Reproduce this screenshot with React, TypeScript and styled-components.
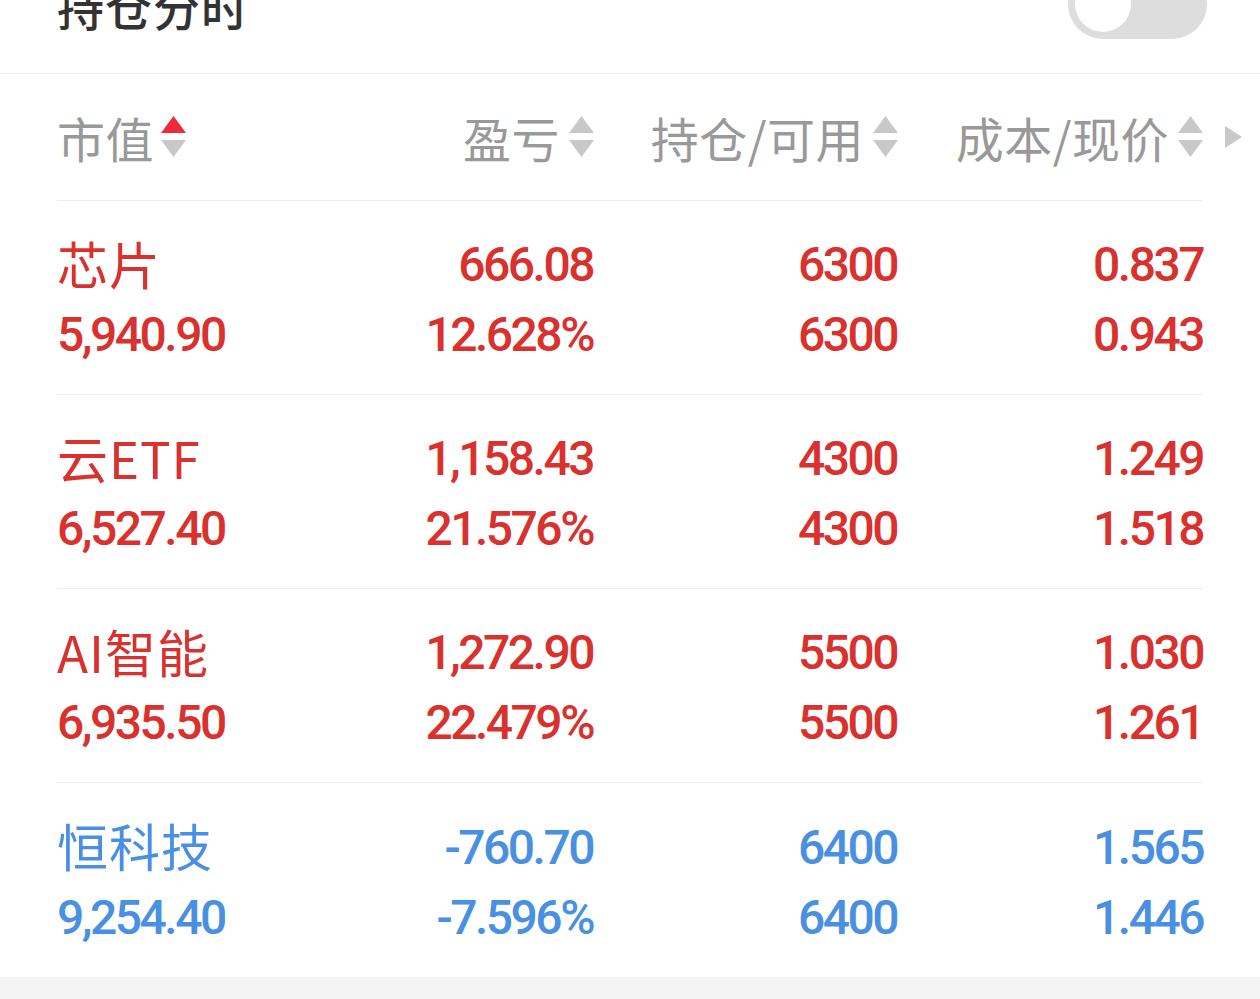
import React from "react";
import styled, { createGlobalStyle } from "styled-components";

/** ===========================================================================
 * Colors
 * ============================================================================
 */
const COLORS = {
  TITLE: "#333333",
  HEADER: "#999999",
  LINE: "#eeeeee",
  UP: "#d9312e",
  DOWN: "#4a90e2",
  SORT_ON: "#f0283a",
  SORT_OFF: "#c8c8c8",
  TRACK: "#dddddd",
  FOOTER: "#f4f4f4",
};

const NUM_FONT = `Roboto, "Noto Sans CJK SC", sans-serif`;
const CJK_FONT = `"Noto Sans CJK SC", "Noto Sans", sans-serif`;

const GlobalStyle = createGlobalStyle`
  html, body {
    margin: 0;
    padding: 0;
    background: ${COLORS.FOOTER};
    overflow: hidden;
  }
  * {
    box-sizing: border-box;
  }
`;

/** ===========================================================================
 * Data
 * ============================================================================
 */
interface IPosition {
  name: string;
  marketValue: string;
  profit: string;
  profitRate: string;
  hold: string;
  available: string;
  cost: string;
  price: string;
  up: boolean;
}

const POSITIONS: IPosition[] = [
  {
    name: "芯片",
    marketValue: "5,940.90",
    profit: "666.08",
    profitRate: "12.628%",
    hold: "6300",
    available: "6300",
    cost: "0.837",
    price: "0.943",
    up: true,
  },
  {
    name: "云ETF",
    marketValue: "6,527.40",
    profit: "1,158.43",
    profitRate: "21.576%",
    hold: "4300",
    available: "4300",
    cost: "1.249",
    price: "1.518",
    up: true,
  },
  {
    name: "AI智能",
    marketValue: "6,935.50",
    profit: "1,272.90",
    profitRate: "22.479%",
    hold: "5500",
    available: "5500",
    cost: "1.030",
    price: "1.261",
    up: true,
  },
  {
    name: "恒科技",
    marketValue: "9,254.40",
    profit: "-760.70",
    profitRate: "-7.596%",
    hold: "6400",
    available: "6400",
    cost: "1.565",
    price: "1.446",
    up: false,
  },
];

/** ===========================================================================
 * Layout
 * ============================================================================
 */
const Page = styled.div`
  width: 1260px;
  height: 999px;
  background: ${COLORS.FOOTER};
  overflow: hidden;
`;

const Card = styled.div`
  background: #ffffff;
`;

const TopBar = styled.div`
  height: 136px;
  margin-top: -62px;
  padding: 0 53px 0 57px;
  display: flex;
  align-items: center;
  justify-content: space-between;
  border-bottom: 1px solid ${COLORS.LINE};
`;

const Title = styled.h2`
  margin: 0;
  font-family: ${CJK_FONT};
  font-size: 47px;
  font-weight: 500;
  line-height: 48px;
  color: ${COLORS.TITLE};
  letter-spacing: 1px;
`;

const Switch = styled.div`
  width: 139px;
  height: 70px;
  margin-top: -4px;
  border-radius: 35px;
  background: ${COLORS.TRACK};
  padding: 7px;
  display: flex;
  align-items: center;
`;

const Knob = styled.div`
  width: 56px;
  height: 56px;
  border-radius: 50%;
  background: #ffffff;
`;

const Table = styled.div`
  padding: 0 57px;
`;

const Grid = styled.div<{ $height: number; $divider?: boolean }>`
  display: grid;
  grid-template-columns: 268px 268px 304px 306px;
  height: ${(p) => p.$height}px;
  align-items: center;
  border-bottom: ${(p) => (p.$divider ? `1px solid ${COLORS.LINE}` : "none")};
`;

const HeadCell = styled.div<{ $left?: boolean }>`
  display: flex;
  align-items: center;
  justify-content: ${(p) => (p.$left ? "flex-start" : "flex-end")};
  gap: ${(p) => (p.$left ? 7 : 9)}px;
  font-family: ${CJK_FONT};
  font-size: 48px;
  line-height: 1;
  color: ${COLORS.HEADER};
  letter-spacing: 0.5px;
  margin-right: ${(p) => (p.$left ? 0 : -1)}px;
`;

const LastHead = styled(HeadCell)`
  margin-right: -39px;
`;

const SortIcon = styled.svg`
  flex-shrink: 0;
  width: 25px;
  height: 42px;
`;

const MoreIcon = styled.svg`
  flex-shrink: 0;
  width: 17px;
  height: 22px;
  margin-left: 13px;
`;

const Cell = styled.div<{ $left?: boolean }>`
  display: flex;
  flex-direction: column;
  align-items: ${(p) => (p.$left ? "flex-start" : "flex-end")};
`;

const Name = styled.div<{ $up: boolean }>`
  height: 70px;
  display: flex;
  align-items: center;
  font-family: ${CJK_FONT};
  font-size: 51px;
  color: ${(p) => (p.$up ? COLORS.UP : COLORS.DOWN)};
  letter-spacing: 1px;
`;

const Num = styled.div<{ $up: boolean }>`
  height: 70px;
  padding-top: 4px;
  display: flex;
  align-items: center;
  font-family: ${NUM_FONT};
  font-size: 48px;
  font-weight: 500;
  letter-spacing: -2.5px;
  color: ${(p) => (p.$up ? COLORS.UP : COLORS.DOWN)};
`;

/** ===========================================================================
 * Sort arrows
 * ============================================================================
 */
const SortArrows = ({ active }: { active?: boolean }) => (
  <SortIcon viewBox="0 0 25 42">
    <polygon
      points="12.5,0 25,17 0,17"
      fill={active ? COLORS.SORT_ON : COLORS.SORT_OFF}
    />
    <polygon points="0,24 25,24 12.5,41" fill={COLORS.SORT_OFF} />
  </SortIcon>
);

const HEADERS = ["盈亏", "持仓/可用", "成本/现价"];

/** ===========================================================================
 * App
 * ============================================================================
 */
export default function App() {
  return (
    <Page>
      <GlobalStyle />
      <Card>
        <TopBar>
          <Title>持仓分时</Title>
          <Switch>
            <Knob />
          </Switch>
        </TopBar>

        <Table>
          <Grid $height={127} $divider>
            <HeadCell $left>
              市值
              <SortArrows active />
            </HeadCell>
            {HEADERS.slice(0, 2).map((h) => (
              <HeadCell key={h}>
                {h}
                <SortArrows />
              </HeadCell>
            ))}
            <LastHead>
              {HEADERS[2]}
              <SortArrows />
              <MoreIcon viewBox="0 0 17 22">
                <polygon points="0,0 17,11 0,22" fill={COLORS.SORT_OFF} />
              </MoreIcon>
            </LastHead>
          </Grid>

          {POSITIONS.map((p, i) => (
            <Grid
              key={p.name}
              $height={194}
              $divider={i < POSITIONS.length - 1}
            >
              <Cell $left>
                <Name $up={p.up}>{p.name}</Name>
                <Num $up={p.up}>{p.marketValue}</Num>
              </Cell>
              <Cell>
                <Num $up={p.up}>{p.profit}</Num>
                <Num $up={p.up}>{p.profitRate}</Num>
              </Cell>
              <Cell>
                <Num $up={p.up}>{p.hold}</Num>
                <Num $up={p.up}>{p.available}</Num>
              </Cell>
              <Cell>
                <Num $up={p.up}>{p.cost}</Num>
                <Num $up={p.up}>{p.price}</Num>
              </Cell>
            </Grid>
          ))}
        </Table>
      </Card>
    </Page>
  );
}
